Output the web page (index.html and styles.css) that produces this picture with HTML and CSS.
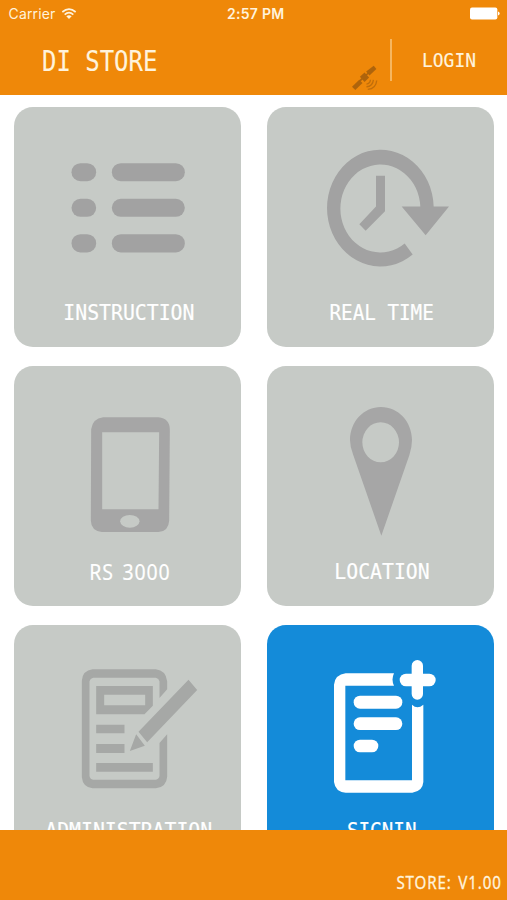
FILE: index.html
```
<!DOCTYPE html>
<html>
   <head>
      <meta charset="UTF-8">
      <meta name="viewport" content="width=device-width, initial-scale=1">
      <title>DI Store</title>
      <link rel="stylesheet" href="styles.css">
   </head>
   <body>
      <div class="header">
         <div class="status-bar">
            <div class="carrier">
               <span>Carrier</span>
               <svg class="wifi" viewBox="0 0 46 36">
                  <path d="M3 12Q23 -5 43 12M10 20Q23 8 36 20" fill="none" stroke="#fff3dc" stroke-width="5"/>
                  <path d="M15 25Q23 18 31 25L23 33z" fill="#fff3dc"/>
               </svg>
            </div>
            <div class="time">2:57 PM</div>
            <div class="battery">
               <svg viewBox="0 0 90 38">
                  <rect x="0" y="1" width="82" height="36" rx="6" fill="#fff"/>
                  <path d="M84 13q5 2 5 6t-5 6z" fill="#fff"/>
               </svg>
            </div>
         </div>
         <div class="nav-bar">
            <h1 class="title"><span>DI STORE</span></h1>
            <svg class="satellite" viewBox="0 0 80 76">
               <g fill="#a8610d">
                  <path d="M23 33L37 20L51 35L37 49z"/>
                  <path d="M42 17L65 -1L73 9L52 29z"/>
                  <path d="M-1 63L21 42L31 52L9 73z"/>
                  <path d="M20 44L48 19L51 22L24 48z"/>
               </g>
               <path d="M43 55Q54 54 55 42M43 63Q62 62 64 42M47 71Q72 69 74 44" fill="none" stroke="#bd6c0b" stroke-width="4"/>
            </svg>
            <div class="login"><span>LOGIN</span></div>
         </div>
      </div>

      <div class="content">
         <div class="card">
            <svg viewBox="40.5 22.5 682.5 570" fill="#a2a2a2">
               <rect x="213" y="191" width="74" height="54" rx="27"/>
               <rect x="334" y="191" width="219" height="54" rx="27"/>
               <rect x="213" y="298" width="74" height="54" rx="27"/>
               <rect x="334" y="298" width="219" height="54" rx="27"/>
               <rect x="213" y="404" width="74" height="55" rx="27"/>
               <rect x="334" y="404" width="219" height="55" rx="27"/>
            </svg>
            <div class="label"><span>INSTRUCTION</span></div>
         </div>
         <div class="card">
            <svg viewBox="38 22.5 682.5 570" fill="#a2a2a2">
               <path d="M538 321A160 175 0 1 0 475 465L451 432A120 132 0 1 1 498 321H442L514 407L584 321z"/>
               <path d="M365 229H392V335L334 394L315 374L365 321z"/>
            </svg>
            <div class="label spaced"><span>REAL TIME</span></div>
         </div>
         <div class="card">
            <svg viewBox="40.5 18 682.5 570" fill="#a6a6a6">
               <path fill-rule="evenodd" d="M308 172H474Q508 175 508 210L506 482Q504 514 474 516H304Q272 512 271 482L272 208Q276 176 308 172zM305 217V448H474L476 217z"/>
               <ellipse cx="388" cy="484" rx="29" ry="19" fill="#c6cac6"/>
            </svg>
            <div class="label plain"><span>RS 3000</span></div>
         </div>
         <div class="card">
            <svg viewBox="38 18 682.5 570" fill="#a6a6a6">
               <path fill-rule="evenodd" d="M380 141C432 141 472 184 473 240Q473 262 465 286L381 527L297 286Q287 262 287 240C288 184 328 141 380 141zM379 187A55 60 0 1 0 379 307A55 60 0 1 0 379 187z"/>
            </svg>
            <div class="label"><span>LOCATION</span></div>
         </div>
         <div class="card">
            <svg viewBox="40.5 15 682.5 570" fill="#a6a8a6">
               <path d="M500 208V184Q496 151 466 148H276Q246 152 244 182V472Q247 502 276 505H466Q498 501 500 470V343L477 369V468Q475 478 466 479H278Q268 477 267 468V184Q269 175 278 173H466Q475 175 477 184V234z"/>
               <path fill-rule="evenodd" d="M287 198H457V257L432 283H287zM311 224V256H434V224z"/>
               <path d="M287 314H372V340H287zM287 372H372V399H287zM287 429H457V455H287z"/>
               <path d="M564 179L590 210L440 367L414 335zM407 343L433 377L388 393z"/>
            </svg>
            <div class="label"><span>ADMINISTRATION</span></div>
         </div>
         <div class="card active">
            <svg viewBox="38 15 682.5 570" fill="#fff">
               <path d="M419 160H274Q242 164 239 194V486Q243 516 274 518H474Q505 514 507 486V254Q489 269 473 254V481H273V197H419Q410 179 419 160z"/>
               <rect x="298" y="227" width="146" height="39" rx="19"/>
               <rect x="298" y="292" width="146" height="38" rx="19"/>
               <rect x="298" y="359" width="74" height="38" rx="19"/>
               <rect x="436" y="161" width="108" height="38" rx="19"/>
               <rect x="472" y="120" width="34" height="119" rx="17"/>
            </svg>
            <div class="label spaced"><span>SIGNIN</span></div>
         </div>
      </div>

      <div class="footer">
         <span class="version">STORE: V1.00</span>
      </div>
   </body>
</html>
```

FILE: styles.css
```
* {
box-sizing: border-box;
}
body {
margin: 0;
height: 900px;
display: flex;
flex-direction: column;
overflow: hidden;
background-color: #fff;
font-family: "DejaVu Sans Mono", monospace;
}
svg {
display: block;
}
.header {
height: 94.5px;
flex: none;
background-color: #ef8809;
color: #fff3dc;
}
.status-bar {
height: 27px;
display: grid;
grid-template-columns: 1fr auto 1fr;
align-items: center;
padding: 0 7px 0 8.5px;
font-family: Inter, "Liberation Sans", sans-serif;
font-size: 14px;
line-height: 27px;
}
.carrier {
display: flex;
align-items: center;
gap: 6px;
letter-spacing: .15px;
}
.wifi {
width: 16px;
height: 12px;
}
.time {
padding-left: 3px;
font-weight: 600;
letter-spacing: .3px;
}
.battery svg {
width: 30px;
height: 13px;
margin-left: auto;
}
.nav-bar {
height: 67px;
display: flex;
-webkit-text-stroke: .15px #fff3dc;
}
.title {
width: 310px;
margin: 0;
padding-left: 42px;
font-size: 28.5px;
font-weight: normal;
line-height: 69px;
}
.title span {
display: inline-block;
transform: scaleX(.84);
transform-origin: left;
}
.satellite {
width: 27px;
height: 25px;
margin: 39px 0 0 42px;
opacity: .9;
overflow: visible;
}
.login {
height: 42px;
margin: 12px 0 0 11px;
padding-left: 30px;
border-left: 2px solid #f6b660;
font-size: 19.5px;
line-height: 43px;
}
.login span {
display: inline-block;
transform: scaleX(.92);
transform-origin: left;
}
.content {
flex: 1;
min-height: 0;
overflow: hidden;
display: grid;
grid-template-columns: 227.5px 227.5px;
grid-auto-rows: 240px;
gap: 19px 25.5px;
padding: 12.5px 0 0 13.5px;
}
.card {
border-radius: 19px;
background-color: #c6cac6;
}
.card svg {
width: 227.5px;
height: 190px;
}
.active {
background-color: #148bd9;
}
.label {
padding-left: 3px;
color: #fff;
font-size: 22px;
line-height: 32px;
text-align: center;
white-space: nowrap;
-webkit-text-stroke: .2px #fff;
}
.label span {
display: inline-block;
transform: scaleX(.9);
}
.spaced span {
transform: scaleX(.875);
}
/* digits without the dotted zero */
.plain, .version {
font-family: "Noto Sans", sans-serif;
}
.plain {
padding-left: 5px;
line-height: 30px;
}
.plain span {
letter-spacing: 1px;
word-spacing: 3px;
transform: scaleX(.885);
}
.footer {
height: 70px;
flex: none;
display: flex;
justify-content: flex-end;
align-items: flex-end;
padding: 0 5px 6px 0;
background-color: #ef8809;
color: #fff3dc;
}
.version {
font-size: 17.5px;
line-height: 24px;
letter-spacing: 1px;
word-spacing: 2px;
transform: scaleX(.865);
transform-origin: right;
-webkit-text-stroke: .3px #fff3dc;
}
```
